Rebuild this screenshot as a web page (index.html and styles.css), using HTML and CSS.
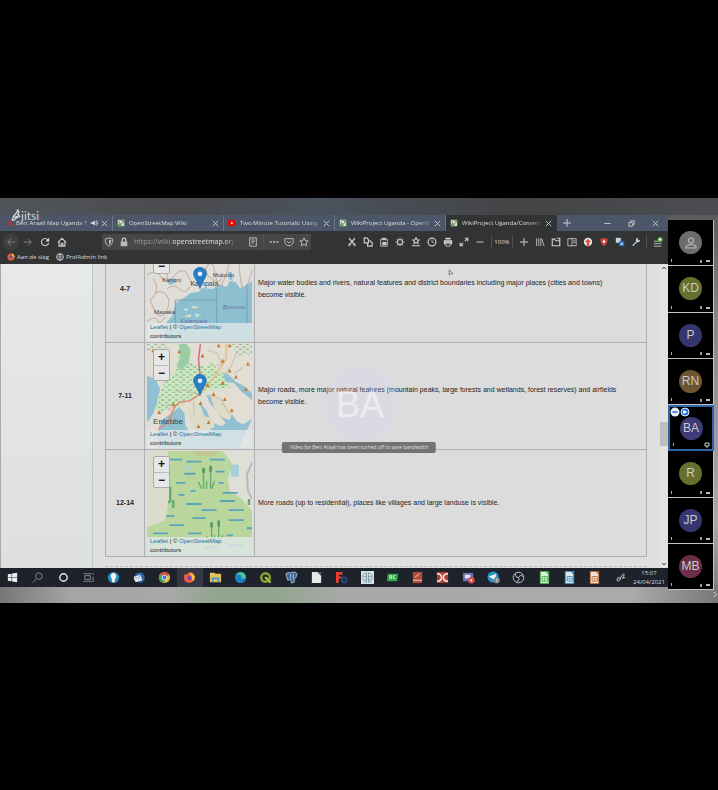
FILE: index.html
```html
<!DOCTYPE html>
<html lang="en">
<head>
<meta charset="utf-8">
<title>Jitsi Meet</title>
<link rel="stylesheet" href="styles.css">
</head>
<body>
<svg class="defs" aria-hidden="true">
  <defs>
    <symbol id="wiki" viewBox="0 0 10 10"><path d="M1 1h8v8H1z" fill="#d5e2c4"/><path d="M1 6l4-1 1 4H1zM6 1h3v5z" fill="#6f9c62"/><circle cx="5" cy="4" r="2" fill="#f4f4f4" stroke="#555" stroke-width=".7"/></symbol>
    <symbol id="youtube" viewBox="0 0 10 10"><rect y="1" width="10" height="8" rx="2" fill="#e00b0b"/><path d="M4 3.400v3.200L6.800 5z" fill="#fff"/></symbol>
    <symbol id="x" viewBox="0 0 10 10"><path d="M2 2l6 6M8 2L2 8" class="ln"/></symbol>
    <symbol id="plus" viewBox="0 0 10 10"><path d="M5 1v8M1 5h8" class="ln"/></symbol>
    <symbol id="minus" viewBox="0 0 10 10"><path d="M1.500 5h7" class="ln"/></symbol>
    <symbol id="pin" viewBox="0 0 26 42"><path d="M13 1C6 1 1 6 1 13c0 8 9 15 12 28 3-13 12-20 12-28C25 6 20 1 13 1z" fill="#267fca" stroke="#1c68aa" stroke-width="1.500"/><circle cx="13" cy="13" r="4.500" fill="#eee"/></symbol>
    <symbol id="tri" viewBox="0 0 4 4"><path d="M2 0l2 4H0z" fill="#c47a35"/></symbol>
    <symbol id="reeds" viewBox="0 0 18 24"><path d="M1 16l3 7M6 5v18M9 15v8M13 4v19M17 15l-3 8" fill="none" stroke="#68ae72" stroke-width="1.400"/><path d="M6 2v5M13 0v6" stroke="#569660" stroke-width="2.600"/></symbol>
    <symbol id="doc" viewBox="0 0 12 14"><path d="M1 0h7l3 3v11H1z" fill="currentColor"/><path d="M2 1h6l2 3v9H2z" fill="#fff" opacity=".8"/><path d="M7 0h4v4z" fill="currentColor"/><path d="M3.500 6h5.500v5H3.500z" fill="#fff" stroke="currentColor"/><path d="M4 8.500h5M6.200 6v5" stroke="currentColor" stroke-width=".8"/></symbol>
    <pattern id="marsh" width="7" height="5" patternUnits="userSpaceOnUse"><path d="M0 1h3M4 3.500h2.500" stroke="#62b57e" stroke-width="1"/></pattern>
  </defs>
</svg>

<main class="meeting">
  <section class="desktop">
    <header class="tabs">
      <div class="tab first"><svg class="ico8" viewBox="0 0 10 10"><path d="M2 2l4 2 2 4-5-1z" fill="none" stroke="#b8352f" stroke-width="1.500"/></svg><span class="title">Bert Araali Map Uganda T</span><svg class="ico8" viewBox="0 0 10 10"><path d="M1 4h2l3-2v6L3 6H1z" fill="#ddd"/><path d="M7 3q2 2 0 4M8 1.500q3 3.500 0 7" class="ln"/></svg><button aria-label="Close tab"><svg><use href="#x"/></svg></button></div>
      <div class="tab"><svg class="ico8"><use href="#wiki"/></svg><span class="title">OpenStreetMap Wiki</span><button aria-label="Close tab"><svg><use href="#x"/></svg></button></div>
      <div class="tab"><svg class="ico8"><use href="#youtube"/></svg><span class="title">Two Minute Tutorials: Using</span><button aria-label="Close tab"><svg><use href="#x"/></svg></button></div>
      <div class="tab"><svg class="ico8"><use href="#wiki"/></svg><span class="title">WikiProject Uganda - OpenS</span><button aria-label="Close tab"><svg><use href="#x"/></svg></button></div>
      <div class="tab active"><svg class="ico8"><use href="#wiki"/></svg><span class="title">WikiProject Uganda/Convent</span><button aria-label="Close tab"><svg><use href="#x"/></svg></button></div>
      <div class="window">
        <button aria-label="New tab" class="new"><svg><use href="#plus"/></svg></button>
        <button aria-label="Minimize"><svg><use href="#minus"/></svg></button>
        <button aria-label="Restore"><svg viewBox="0 0 10 10"><path d="M2 4h4v4H2zM4 4V2h4v4H6" class="ln"/></svg></button>
        <button aria-label="Close window"><svg><use href="#x"/></svg></button>
      </div>
    </header>

    <nav class="toolbar">
      <div class="nav">
        <button class="back" aria-label="Back"><svg viewBox="0 0 12 12"><path d="M11 6H2M6 2L2 6l4 4" class="ln"/></svg></button>
        <button class="dim" aria-label="Forward"><svg viewBox="0 0 12 12"><path d="M1 6h9M6 2l4 4-4 4" class="ln"/></svg></button>
        <button aria-label="Reload"><svg viewBox="0 0 12 12"><path d="M9.500 3.500A4.300 4.300 0 1 0 10.300 7" class="ln thick"/><path d="M11 1v4.500H6.500z" fill="#ddd"/></svg></button>
        <button aria-label="Home"><svg viewBox="0 0 12 12"><path d="M1 6.500L6 1.500l5 5M2.500 6v5h7V6M5 11V7.500h2V11" class="ln thick"/></svg></button>
      </div>
      <div class="url">
        <svg viewBox="0 0 12 12"><path d="M6 1l4.500 1.500C10.500 7 9 9.500 6 11 3 9.500 1.500 7 1.500 2.500z" class="ln"/><path d="M6 3v6c2-1 2.700-3 2.700-5z" fill="#bbb"/></svg>
        <svg viewBox="0 0 12 12"><path d="M2 5.500h8V11H2z" fill="#bbb"/><path d="M3.800 6V3.500a2.200 2.200 0 0 1 4.400 0V6" class="ln thick"/></svg>
        <span class="address">https://wiki.<b>openstreetmap.org</b></span>
        <svg viewBox="0 0 12 12"><path d="M2 1h8v10H2zM4 3.500h4M4 5.500h4M4 7.500h2.500" class="ln"/></svg>
        <i class="sep"></i>
        <svg viewBox="0 0 12 12"><path d="M1 5h2.200v2H1zM5 5h2.200v2H5zM9 5h2.200v2H9z" fill="#ccc"/></svg>
        <svg viewBox="0 0 12 12"><path d="M1 2h10v3.500a5 5 0 0 1-10 0zM3.500 5L6 7.300 8.500 5" class="ln"/></svg>
        <svg viewBox="0 0 12 12"><path d="M6 1l1.500 3.300 3.500.4-2.600 2.400.7 3.600L6 8.900l-3.100 1.800.7-3.600L1 4.700l3.500-.4z" class="ln"/></svg>
      </div>
      <div class="tools">
        <button aria-label="Cut"><svg viewBox="0 0 12 12"><path d="M2.500 1.500L9 9M9.500 1.500L3 9" class="ln thick"/><circle cx="3" cy="9.500" r="1.200" class="ln"/><circle cx="9" cy="9.500" r="1.200" class="ln"/></svg></button>
        <button aria-label="Copy"><svg viewBox="0 0 12 12"><path d="M1.500 1h3l2 2v4h-5zM6 4.500h2.500L11 7v4H5.500V7" class="ln thick"/></svg></button>
        <button aria-label="Paste"><svg viewBox="0 0 12 12"><path d="M2 2.500h8V11H2z" class="ln"/><path d="M4 1h4v3H4zM4 6h5v4H4z" fill="#ccc"/></svg></button>
        <button aria-label="Settings"><svg viewBox="0 0 12 12"><circle cx="6" cy="6" r="3" class="ln thick"/><path d="M6 .5v2M6 9.500v2M.5 6h2M9.500 6h2M2 2l1.500 1.500M8.500 8.500L10 10M10 2L8.500 3.500M3.500 8.500L2 10" class="ln"/></svg></button>
        <button aria-label="Bookmarks"><svg viewBox="0 0 12 12"><path d="M6 1l1.200 2.300 2.500.3-1.800 1.800.4 2.400L6 6.700 3.700 7.800l.4-2.400-1.800-1.800 2.500-.3zM1 10.500h10" class="ln thick"/></svg></button>
        <button aria-label="History"><svg viewBox="0 0 12 12"><circle cx="6" cy="6" r="4.700" class="ln thick"/><path d="M6 3v3.300h2.500" class="ln"/></svg></button>
        <button aria-label="Print"><svg viewBox="0 0 12 12"><path d="M3 1h6v2H3zM1 4h10v5H9V7H3v2H1z" fill="#ccc"/><path d="M3.500 7.500h5V11h-5z" class="ln"/></svg></button>
        <button aria-label="Full screen"><svg viewBox="0 0 12 12"><path d="M7 1.500h3.500V5M10.500 1.500L7 5M1.500 7v3.500H5M1.500 10.500L5 7" class="ln thick"/></svg></button>
        <button aria-label="Zoom out"><svg><use href="#minus"/></svg></button>
        <span class="zoom">100%</span>
        <button aria-label="Zoom in"><svg><use href="#plus"/></svg></button>
        <button aria-label="Library"><svg viewBox="0 0 12 12"><path d="M2 1.500V11M4.500 1.500V11M7 1.500V11M8 2l3 9" class="ln"/></svg></button>
        <button aria-label="Open file"><svg viewBox="0 0 12 12"><path d="M1.500 10.500v-8h3l1 2h5v6zM7 1.500h3.500V4" class="ln thick"/></svg></button>
        <button aria-label="Sidebar"><svg viewBox="0 0 12 12"><path d="M1 2h10v8.500H1zM6 2v8.500M7.500 4.500H10M7.500 6.500H10" class="ln"/></svg></button>
        <button aria-label="Downloader"><svg viewBox="0 0 12 12"><circle cx="6" cy="6" r="5" fill="#e5e1df"/><path d="M6 2l3.500 4H7.500v5h-3V6h-2z" fill="#d65435"/></svg></button>
        <button aria-label="Blocker"><svg viewBox="0 0 12 12"><path d="M6 1l4.500 1.500C10.500 7 9 9.500 6 11 3 9.500 1.500 7 1.500 2.500z" fill="#ca3f3b"/><path d="M6 3.500l2 2-2 2-2-2z" fill="#fff"/></svg></button>
        <button aria-label="Translate"><svg viewBox="0 0 12 12"><path d="M1 1h6v6H1z" fill="#ccd5df"/><path d="M5 5h6v6H5z" fill="#2d73cf"/><path d="M7 7l2 2.500M9 7L7 9.500" stroke="#fff"/></svg></button>
        <button aria-label="Tools"><svg viewBox="0 0 12 12"><path d="M2 10.500L7.500 5" class="ln thick"/><path d="M10.800 3.500a2.700 2.700 0 0 1-4 2.500A2.700 2.700 0 0 1 9 1.200L8 3.200l1 .8z" fill="#ccc"/></svg></button>
      </div>
      <i class="sep"></i>
      <button class="menu" aria-label="Menu"><svg viewBox="0 0 12 12"><path d="M1 5h9M1 8h9M1 11h9" class="ln"/><circle cx="8.500" cy="3" r="3" fill="#62b643"/><path d="M8.500 1.500v3M7 3h3" stroke="#fff"/></svg></button>
    </nav>

    <div class="bookmarks">
      <a href="#"><svg viewBox="0 0 10 10"><circle cx="5" cy="5" r="4.500" fill="#e8632b"/><circle cx="5" cy="5" r="2.200" fill="#4b62b5"/><path d="M6 0q4 2 3 6L7 4z" fill="#f3bd3d"/></svg>Aan de slag</a>
      <a href="#"><svg viewBox="0 0 10 10"><circle cx="5" cy="5" r="4.300" class="ln"/><path d="M5 .7v8.600M.7 5h8.600M2 2.200h6M2 7.800h6" class="ln"/></svg>ProfAdmin link</a>
    </div>

    <div class="page">
      <aside class="side"></aside>
      <article class="wiki">
        <table>
          <tbody>
          <tr>
            <th scope="row">4-7</th>
            <td class="cell"><div class="map">
              <svg class="ground" viewBox="0 0 104 104" preserveAspectRatio="xMidYMid slice">
                <path d="M0 0h104v104H0z" fill="#e0ded8"/>
                <path d="M18 104V90l2-6 5-5 3-13 10-6 5-4 8-1 4-4 10 1 6-5 8 3 3-6 6 1 4 6 5-2 7-5v60z" fill="#8cc0d0"/>
                <path d="M20 44l4-3 5 1-1 4-6 2zM80 35l4 0 1 9-4-2z" fill="#8cc0d0"/>
                <path d="M0 38q9-6 14 2t14-2 14 4 14-6 12 3 12-7 12 4 12-3M5 62q6-12 13-5t1 17-12-2-2-10M20 52q6-6 12 0t10-2M6 42q6 8 2 14M20 30v14M0 84q8-6 10-1t8-3M60 28q-4 8 4 14t10-2" fill="none" stroke="#c4afa8"/>
                <path d="M28 63h41v24M69 63V52M28 63v24M99 47v40" fill="none" stroke="#7695a5" stroke-width=".8"/>
                <path d="M36 72l4-1v3zM44 69h6v2h-5zM36 79l8-2-1 3zM48 76l5 2-5 2z" fill="#d9e2c8"/>
                <g class="place"><text x="15" y="45">Kanoni</text><text x="65" y="40">Mukono</text><text x="7" y="77">Masaka</text><text class="big" x="43" y="49">Kampala</text><text class="water" x="75" y="72">Buvuma</text><text class="water" x="33" y="86">Kalangala</text></g>
              </svg>
              <svg class="pin"><use href="#pin"/></svg>
              <div class="zoomer"><button aria-label="Zoom in">+</button><button aria-label="Zoom out">−</button></div>
              <div class="credit"><a href="#">Leaflet</a> | © <a href="#">OpenStreetMap</a><br>contributors</div>
            </div></td>
            <td>Major water bodies and rivers, natural features and district boundaries including major places (cities and towns) become visible.</td>
          </tr>
          <tr>
            <th scope="row">7-11</th>
            <td class="cell"><div class="map">
              <svg class="ground" viewBox="0 0 104 104" preserveAspectRatio="xMidYMid slice">
                <path d="M0 0h104v104H0z" fill="#e2ded3"/>
                <path d="M31 0h9l4 7-3 8 6 6 12 2 4-6 6 8 11 7 2 12-10 1-14 1-7 9-12 3-8 6-9-1-9 7-5-6 5-15 5-13 10-8 3-9z" fill="#d2e6c4"/>
                <path d="M31 0h9l4 7-3 8 6 6 12 2 4-6 6 8 11 7 2 12-10 1-14 1-7 9-12 3-8 6-9-1-9 7-5-6 5-15 5-13 10-8 3-9zM0 0h18l5 14-8-1-9-6-6 2zM84 0h20v12l-8-2-6 4z" fill="url(#marsh)"/>
                <path d="M32 0h7l4 8-2 12-8 7-4-5 4-8z" fill="#9bcda4"/>
                <path d="M0 32l8 3 5 10-3 13-4 12-6 8zM104 75l-9 5-6-3-8-12-11-8-5-7-6 1 3 8 6 7 10 13-4 3-10-4-5-12-5-5-6 2 4 12 9 4 1 7-9 8-9-3-6-10-1-12-5-6-9 7-10 7-2 15v11h80zM104 56l-10-8-8-9-8-1-3-9 5 1 8 8 8 4 8 7z" fill="#8fc1d2"/>
                <path d="M40 56l8 0 6 8 3 8 8 2 2 8-8 6-10 1-4-9-4-9zM62 50l8 2 8 8 6 10-2 6-8-3-7-8z" fill="#dedbc9"/>
                <path d="M29 48q7-5 14 0t14-4M18 58l4 8 5-5M76 31l7-8 6-14M86 30l8-6M59 52l13 2 10 16M47 71l-1-12M60 7l9 2 5 11-8 3" fill="none" stroke="#c7bdb2"/>
                <path d="M79 0l-1 16-6 9-8 12-11 12" fill="none" stroke="#e7bd82" stroke-width="1.500"/>
                <path d="M53 0l-2 16 2 19v14" fill="none" stroke="#d76a87" stroke-width="1.500"/>
                <path d="M53 49q-10 10-21 9-7 6-10 18-5 6-10 8v8" fill="none" stroke="#e58b72" stroke-width="1.500"/>
                <g><use href="#tri" x="4" y="5" width="4" height="4"/><use href="#tri" x="30" y="6" width="4" height="4"/><use href="#tri" x="53" y="10" width="4" height="4"/><use href="#tri" x="69" y="0" width="4" height="4"/><use href="#tri" x="80" y="0" width="4" height="4"/><use href="#tri" x="73" y="15" width="4" height="4"/><use href="#tri" x="98" y="18" width="4" height="4"/><use href="#tri" x="80" y="25" width="4" height="4"/><use href="#tri" x="86" y="31" width="4" height="4"/><use href="#tri" x="96" y="43" width="4" height="4"/><use href="#tri" x="73" y="37" width="4" height="4"/><use href="#tri" x="58" y="39" width="4" height="4"/><use href="#tri" x="64" y="48" width="4" height="4"/><use href="#tri" x="75" y="53" width="4" height="4"/><use href="#tri" x="82" y="64" width="4" height="4"/><use href="#tri" x="24" y="58" width="4" height="4"/><use href="#tri" x="10" y="66" width="4" height="4"/><use href="#tri" x="51" y="57" width="4" height="4"/><use href="#tri" x="59" y="76" width="4" height="4"/><use href="#tri" x="49" y="80" width="4" height="4"/></g>
                <g class="place"><text class="town" x="6" y="80">Entebbe</text></g>
              </svg>
              <svg class="pin"><use href="#pin"/></svg>
              <div class="zoomer"><button aria-label="Zoom in">+</button><button aria-label="Zoom out">−</button></div>
              <div class="credit"><a href="#">Leaflet</a> | © <a href="#">OpenStreetMap</a><br>contributors</div>
            </div></td>
            <td>Major roads, more major natural features (mountain peaks, large forests and wetlands, forest reserves) and airfields become visible.</td>
          </tr>
          <tr>
            <th scope="row">12-14</th>
            <td class="cell"><div class="map">
              <svg class="ground" viewBox="0 0 104 104" preserveAspectRatio="xMidYMid slice">
                <path d="M0 0h104v104H0z" fill="#b9d69c"/>
                <path d="M0 0h20l4 12-3 10 2 16-3 20-2 11-18 7z" fill="#dbdccb"/>
                <path d="M75 0h29v60l-10-12-12-8-2-12 5-14z" fill="#dedfd6"/>
                <path d="M43 0h28l-5 5H50z" fill="#c3c493"/>
                <path d="M83 14h8v12h-8z" fill="#a8cfd8"/><path d="M37 17l6-2v4h-6z" fill="#a9cfdd"/>
                <path d="M104 12l-5 12 1 16 4 8" fill="none" stroke="#c3b4bc" stroke-width="2"/>
                <path d="M23 36v14l-2 2M26 49v8M101 48v6" fill="none" stroke="#6aa879" stroke-width="2.400"/>
                <use href="#reeds" x="50" y="15" width="18" height="24"/><use href="#reeds" x="58" y="69" width="18" height="24"/>
                <path d="M23 9h12M39 11h15M62 9h15M37 23h11M68 21h9M29 32h9M71 32h5M43 40h5M31 44h6M75 42h15M39 53h15M72 50h15M54 59h15M81 59h15M19 65h8M45 67h13M81 69h15M22 74h15M6 82h15M41 82h13M79 84h6M99 77h5M56 96h15M80 94h15" stroke="#5ba4c0" stroke-width="1.800"/>
              </svg>
              <div class="zoomer"><button aria-label="Zoom in">+</button><button aria-label="Zoom out">−</button></div>
              <div class="credit"><a href="#">Leaflet</a> | © <a href="#">OpenStreetMap</a><br>contributors</div>
            </div></td>
            <td>More roads (up to residential), places like villages and large landuse is visible.</td>
          </tr>
          </tbody>
        </table>
        <div class="more"></div>
      </article>
      <div class="scroll" aria-hidden="true"><svg viewBox="0 0 8 8"><path d="M2 5l2-2 2 2" /></svg><i></i><svg viewBox="0 0 8 8"><path d="M2 3l2 2 2-2"/></svg></div>
      <svg class="cursor" viewBox="0 0 6 8"><path d="M1 1v6l1.500-1.500L5 5z" fill="#eee" stroke="#333" stroke-width=".7"/></svg>
    </div>

    <footer class="taskbar">
      <div class="apps">
        <button aria-label="Start"><svg viewBox="0 0 14 14"><path d="M2 3.500l4-.6v3.800H2zM6.600 2.800L12 2v4.700H6.600zM2 7.300h4v3.800l-4-.6zM6.600 7.300H12V12l-5.400-.8z" fill="#eee"/></svg></button>
        <button class="dim" aria-label="Search"><svg viewBox="0 0 14 14"><circle cx="8.500" cy="5.500" r="3.500" class="ln"/><path d="M6 8l-4 4.500" class="ln"/></svg></button>
        <button aria-label="Cortana"><svg viewBox="0 0 14 14"><circle cx="7" cy="7" r="4" fill="none" stroke="#eee" stroke-width="1.500"/></svg></button>
        <button class="dim" aria-label="Task view"><svg viewBox="0 0 14 14"><path d="M3 5h6v4H3zM2 2v1h8V2M2 12v-1h8v1M12 2v2M12 6v6" class="ln"/></svg></button>
        <button aria-label="Tips"><svg viewBox="0 0 14 14"><circle cx="7" cy="7" r="6" fill="#1f8fc4"/><path d="M7 2a3.500 3.500 0 0 0-2 6l.7 4h2.600L9 8a3.500 3.500 0 0 0-2-6z" fill="#f4f4e9"/></svg></button>
        <button aria-label="Thunderbird"><svg viewBox="0 0 14 14"><path d="M2 4q5-5 10 0 2 5-2 8-4 1-6-1z" fill="#2868b4"/><path d="M1 6l7-2 2 6-7 2-2-3z" fill="#dfe4ec"/><path d="M1 6l5 2 2-4" fill="none" stroke="#8ba3c6" stroke-width=".8"/></svg></button>
        <button aria-label="Chrome"><svg viewBox="0 0 14 14"><circle cx="7" cy="7" r="6" fill="#e3bb38"/><path d="M7 7L1.800 4A6 6 0 0 1 12.200 4z" fill="#d84b3d"/><path d="M7 7L1.800 4A6 6 0 0 0 7 13z" fill="#43a35a"/><circle cx="7" cy="7" r="2.600" fill="#3c7bdd" stroke="#eee"/></svg></button>
        <button class="on" aria-label="Firefox"><svg viewBox="0 0 14 14"><path d="M2 3l2 1q2-3 4-3l1 2 2-1q3 5 1 8-5 5-9 1-3-3-1-8z" fill="#f46432"/><path d="M8 1l5 5-2 5-3-4z" fill="#fbc63f"/><circle cx="7" cy="7.500" r="2.600" fill="#8342ae"/><path d="M2 7q1 6 7 5-5 2-8-2z" fill="#e3366e"/></svg></button>
        <button aria-label="Files"><svg viewBox="0 0 14 14"><path d="M1 2h5l1 1h6v9H1z" fill="#eac25a"/><path d="M3 7h8v5H9V9H5v3H3z" fill="#3d99c9"/></svg></button>
        <button aria-label="Edge"><svg viewBox="0 0 14 14"><circle cx="7" cy="7" r="6" fill="#1b83ca"/><path d="M2 4q3-4 8-2 4 3 2 6-3 1-4-1 1-4-6-3z" fill="#4ac997"/><path d="M5 7q0 4 7 3H6.500Q4.500 9 5 7z" fill="#1d2733"/></svg></button>
        <button aria-label="QGIS"><svg viewBox="0 0 14 14"><circle cx="7" cy="7" r="4.600" fill="none" stroke="#86a932" stroke-width="2.600"/><path d="M7 7l5.500 5.500" stroke="#a6bb3c" stroke-width="2.400"/><path d="M6 6l3 1-2 2z" fill="#dfc94b"/></svg></button>
        <button aria-label="PostgreSQL"><svg viewBox="0 0 14 14"><path d="M1 3q2-2 5-1 5-2 7 1-1 5-3 6v3l-3 1-1-4-3 1z" fill="#386a9c" stroke="#bac9d8" stroke-width=".9"/><path d="M6 3v5M9 3v6" stroke="#bac9d8" stroke-width=".9"/></svg></button>
        <button aria-label="Document"><svg viewBox="0 0 14 14"><path d="M2 1h6l4 4v8H2z" fill="#e9e9e9"/><path d="M8 1h4v4z" fill="#5a5e63"/></svg></button>
        <button aria-label="FreeCAD"><svg viewBox="0 0 14 14"><path d="M1 1h7v3H4v2h3v2H4v5H1z" fill="#e8422e"/><circle cx="10" cy="9.500" r="2.700" fill="none" stroke="#25498e" stroke-width="2"/></svg></button>
        <button aria-label="Brain"><svg viewBox="0 0 14 14"><path d="M0 0h14v14H0z" fill="#dae1e5"/><path d="M6 2q-5 1-4 6 1 4 4 4zM8 2q5 1 4 6-1 4-4 4zM3 6h3M8 6h3M4 9h2M8 9h2" fill="none" stroke="#7799ad"/></svg></button>
        <button aria-label="QC"><svg viewBox="0 0 14 14"><path d="M2 3h11l-1 8H1z" fill="#31a644"/><path d="M6 5H4v3h2zM10 5H8v3h2" fill="none" stroke="#d9f1d9"/></svg></button>
        <button aria-label="Notebook"><svg viewBox="0 0 14 14"><path d="M2 1h10v12H2z" fill="#b54b36"/><path d="M4 7l5-4M2 10h10" stroke="#ecd2c0"/></svg></button>
        <button aria-label="DC"><svg viewBox="0 0 14 14"><path d="M1 1h12v12H1z" fill="#b33b31"/><path d="M1 3q5 0 5 4t-5 4M13 3Q8 3 8 7t5 4" fill="none" stroke="#eee" stroke-width="1.700"/></svg></button>
        <button aria-label="Discord"><svg viewBox="0 0 14 14"><path d="M1 2h11v9H1z" fill="#6871b4"/><path d="M3 4h6v4H3z" fill="#e1e3f2"/><circle cx="10" cy="10" r="3.500" fill="#e14e50"/><circle cx="10" cy="10" r="1" fill="#fff"/></svg></button>
        <button aria-label="Telegram"><svg viewBox="0 0 14 14"><circle cx="6.500" cy="6.500" r="6" fill="#2796c7"/><path d="M2 6l8-3-1.500 7-3-2z" fill="#f4f4f4"/><circle cx="10.500" cy="10" r="3.400" fill="#7d858c"/><path d="M10.500 8v4" stroke="#ddd"/></svg></button>
        <button aria-label="OBS"><svg viewBox="0 0 14 14"><circle cx="7" cy="7" r="5.700" class="ln"/><path d="M7 7q-4 0-3-4M7 7q2-4 5-1M7 7q2 4-2 4" class="ln"/></svg></button>
        <button class="calc" aria-label="Calc"><svg><use href="#doc"/></svg></button>
        <button class="writer" aria-label="Writer"><svg><use href="#doc"/></svg></button>
        <button class="impress" aria-label="Impress"><svg><use href="#doc"/></svg></button>
        <button aria-label="Tray"><svg viewBox="0 0 14 14"><path d="M3 10q1-4 3-3t0 3-3 0M6 9l4-6q2 1-1 5l3-1" class="ln"/></svg></button>
      </div>
      <time datetime="2021-04-24T15:07">15:07<br>24/04/2021</time>
    </footer>
  </section>

  <aside class="film">
    <div class="tile"><span class="avatar guest"><svg viewBox="0 0 14 14"><circle cx="7" cy="4.500" r="2.500"/><path d="M2 12v-1q1-2.500 5-2.500T12 11v1z"/></svg></span><i class="state"></i></div>
    <div class="tile"><span class="avatar olive">KD</span><i class="state"></i></div>
    <div class="tile"><span class="avatar indigo">P</span><i class="state"></i></div>
    <div class="tile"><span class="avatar brown">RN</span><i class="state"></i></div>
    <div class="tile speaking"><span class="avatar violet">BA</span><svg class="badges" viewBox="0 0 20 10"><circle cx="5" cy="5" r="4.500" fill="#e4edfb"/><path d="M2.500 5h5" stroke="#246fc4" stroke-width="1.500"/><circle cx="15" cy="5" r="4" fill="#2774d8" stroke="#dce8fa"/><path d="M13 3.500h2l2 1.500-2 1.500h-2z" fill="#fff"/></svg><svg class="screen" viewBox="0 0 6 6"><path d="M1 1h4v3H1zM2 5h2" fill="none" stroke="#ccc"/></svg></div>
    <div class="tile"><span class="avatar olive">R</span><i class="state"></i></div>
    <div class="tile"><span class="avatar indigo">JP</span><i class="state"></i></div>
    <div class="tile"><span class="avatar plum">MB</span><i class="state"></i></div>
  </aside>

  <div class="brand"><svg viewBox="0 0 10 14"><path d="M1 12q1-5 4-7l2-4q2 3 0 5l2 2-4 2-2 2zM3 9l4-1" fill="none" stroke="#d6d6d6" stroke-width="1.400"/></svg>jitsi</div>
  <div class="speaker">BA</div>
  <div class="notice">Video for Bert Araali has been turned off to save bandwidth</div>
  <button class="toggle" aria-label="Hide filmstrip"><svg viewBox="0 0 6 8"><path d="M1 1l3 3-3 3" fill="none" stroke="#eee"/></svg></button>
</main>
</body>
</html>
```
FILE: styles.css
```css
* { box-sizing: border-box; }
body { margin: 0; min-height: 100vh; background: #000; display: flex; align-items: center; padding-top: 11px; font-family: "Open Sans", "Noto Sans", sans-serif; font-size: 6px; color: #ddd; }
button { padding: 0; border: 0; background: none; color: inherit; font: inherit; display: flex; align-items: center; justify-content: center; }
a { color: inherit; text-decoration: none; }
svg { display: block; flex: none; }
.defs { position: absolute; width: 0; height: 0; }
.ln { fill: none; stroke: #ccc; stroke-width: 1; }
.thick { stroke-width: 1.4; }

.meeting { position: relative; width: 100%; display: flex; align-items: flex-start; padding: 17px 4px 13px 0; background: linear-gradient(90deg, #50545a, #4b4b4f 25%, #4a525c 45%, #444446 72%, #4b4d51) top / 100% 17px no-repeat, linear-gradient(90deg, #777, #a5a5a5 10%, #a8a8a8 24%, #92a58f 30%, #92a58f 38%, #a9a9a9 48%, #aaa 88%, #777) bottom / 100% 18px no-repeat, linear-gradient(#555, #888 30%, #aaa 80%, #777); }

.desktop { flex: 1; min-width: 0; background: #323335; }
.tabs { display: flex; height: 16px; padding-left: 2px; background: #4b5769; }
.tab { width: 111px; min-width: 0; display: flex; align-items: center; gap: 4px; padding: 0 3px 0 4px; border-right: 1px solid #6b7482; }
.tab.active { background: #323335; border-color: #323335; }
.tab .title { flex: 1; overflow: hidden; white-space: nowrap; font-size: 6px; line-height: 16px; mask-image: linear-gradient(90deg, #000 86%, rgba(0, 0, 0, .3)); }
.ico8 { width: 8px; height: 8px; }
.tab.first { gap: 2px; }
.tab button svg { width: 9px; height: 9px; }
.window { flex: 1; display: flex; align-items: center; justify-content: space-between; padding: 0 8px 0 5px; }
.window svg { width: 9px; height: 9px; }
.window .new { margin-right: 16px; }
.window .new svg { width: 10px; height: 10px; }

.toolbar { display: flex; align-items: center; height: 21px; }
.toolbar svg { width: 10px; height: 10px; }
.nav { display: flex; gap: 1px; width: 102px; padding-left: 3px; }
.nav button { width: 16px; height: 16px; }
.nav .back { border-radius: 50%; background: #484848; }
.back, .dim { opacity: .6; }
.url { width: 209px; height: 16px; display: flex; align-items: center; gap: 5px; padding: 0 2px; background: #474749; }
.url .address { flex: 1; overflow: hidden; white-space: nowrap; font-size: 7px; line-height: 16px; color: #999; margin-right: 10px; mask-image: linear-gradient(90deg, #000 92%, rgba(0, 0, 0, .3)); }
.url b { font-weight: 400; color: #e0e0e0; }
.sep { width: 1px; height: 14px; background: #505052; }
.tools { flex: 1; display: flex; align-items: center; justify-content: space-between; padding: 0 5px 0 36px; }
.tools .zoom { font-size: 6px; line-height: 12px; padding: 0 2px; border: solid #505052; border-width: 0 1px; }
.menu { width: 21px; }
.bookmarks { height: 12px; display: flex; align-items: center; gap: 7px; padding: 0 7px; line-height: 12px; margin-top: -1px; margin-bottom: 1px; }
.bookmarks a { display: flex; align-items: center; gap: 2px; }
.bookmarks svg { width: 8px; height: 8px; }

.page { position: relative; display: flex; height: 304px; overflow: hidden; background: #dfdfdf; color: #222; font-family: "Liberation Sans", sans-serif; }
.side { width: 93px; background: linear-gradient(#e6e8ea, #dedfe0); border-right: 1px solid #bfc8cc; border-left: 1px solid #aaa; }
.wiki { flex: 1; padding: 0 12px; margin-top: -29px; }
table { width: 100%; border-collapse: collapse; font-size: 7px; line-height: 12px; }
tr { height: 107px; }
th, td { border: 1px solid #aeb0b1; padding: 0 18px 0 3px; background: #dcdcdc; text-align: left; }
th { width: 39px; padding: 0 3px; text-align: center; }
.cell { width: 110px; padding: 1px 2px; }
.map { position: relative; height: 104px; overflow: hidden; display: flex; align-items: flex-end; }
.ground { position: absolute; inset: 0; width: 100%; height: 100%; }
.pin { position: absolute; left: 50%; top: 50%; width: 14px; height: 22px; margin: -22px 0 0 -7px; }
.place { font-size: 6px; fill: #444; }
.place .big { font-size: 7px; }
.place .town { font-size: 8px; }
.place .water { font-style: italic; fill: #6a6fae; }
.zoomer { position: absolute; left: 6px; top: 5px; width: 17px; border: 1px solid #aaa; border-radius: 2px; background: #e6e6e6; }
.zoomer button { width: 100%; height: 15px; font-size: 12px; line-height: 15px; font-weight: 700; color: #111; }
.zoomer button + button { border-top: 1px solid #bbb; }
.credit { position: relative; width: 100%; padding: 0 3px; font-size: 6px; line-height: 9px; background: rgba(224, 231, 234, .8); }
.credit a { color: #1c749c; }
.more { margin-top: 9px; border-top: 1px dashed #bbb; }
.scroll { width: 9px; display: flex; flex-direction: column; align-items: center; background: #e2e2e2; }
.scroll svg { width: 8px; height: 8px; fill: none; stroke: #444; }
.scroll i { width: 8px; height: 24px; background: #bfbfbf; margin: auto 0 114px; }
.cursor { position: absolute; left: 448px; top: 5px; width: 6px; height: 7px; }

.taskbar { display: flex; align-items: center; height: 19px; background: #1d222b; }
.apps { flex: 1; display: flex; height: 100%; }
.apps button { flex: 1; }
.apps svg { width: 13px; height: 13px; }
.apps .on { background: #353844; }
.apps .calc { color: #4aa84a; }
.apps .writer { color: #3d8fb8; }
.apps .impress { color: #b5703f; }
.taskbar time { width: 35px; padding-right: 3px; display: flex; justify-content: center; font-size: 6px; line-height: 9px; text-align: center; white-space: nowrap; }

.film { width: 46px; margin-top: 5px; display: grid; grid-template-rows: repeat(8, 1fr); height: 370px; background: #c4c4c4; }
.tile { position: relative; display: grid; place-items: center; background: #000; border: solid #c4c4c4; border-width: 0 1px 1px 0; }
.tile.speaking { border: 2px solid #2f65ad; }
.tile::after { content: ""; position: absolute; left: 3px; bottom: 3px; width: 1px; height: 3px; background: #aaa; }
.avatar { width: 23px; height: 23px; border-radius: 50%; display: grid; place-items: center; font: 12px/23px "Liberation Sans", sans-serif; color: #c9c9c9; }
.guest { background: #6c6c6c; }
.guest svg { width: 14px; height: 14px; fill: none; stroke: #bbb; stroke-width: 1.2; }
.olive { background: #65702f; }
.indigo { background: #35366f; }
.violet { background: #3d3b78; }
.brown { background: #6d5433; }
.plum { background: #6b2e49; }
.state { position: absolute; right: 3px; bottom: 2px; width: 10px; height: 4px; background: linear-gradient(#bbb, #bbb) right center / 4px 2px no-repeat, linear-gradient(#999, #999) left center / 2px 3px no-repeat; }
.badges { position: absolute; left: 0; top: 0; width: 20px; height: 10px; }
.screen { position: absolute; right: 2px; bottom: 1px; width: 6px; height: 6px; }

.brand { position: absolute; left: 11px; top: 10px; display: flex; align-items: center; font: 12px/15px Lato, sans-serif; color: #d2d2d2; }
.brand svg { width: 10px; height: 13px; }
.speaker { position: absolute; left: 50%; top: 168px; width: 76px; height: 76px; margin-left: -37px; border-radius: 50%; text-align: center; font: 36px/78px "Liberation Sans", sans-serif; color: rgba(250, 250, 255, .55); background: rgba(215, 215, 255, .22); }
.notice { position: absolute; left: 50%; top: 244px; transform: translateX(-50%); padding: 0 8px; border-radius: 2px; background: #737373; color: #e2e2e2; font-size: 5px; line-height: 11px; white-space: nowrap; }
.toggle { position: absolute; right: 0; bottom: 5px; }
.toggle svg { width: 5px; height: 7px; }
```
